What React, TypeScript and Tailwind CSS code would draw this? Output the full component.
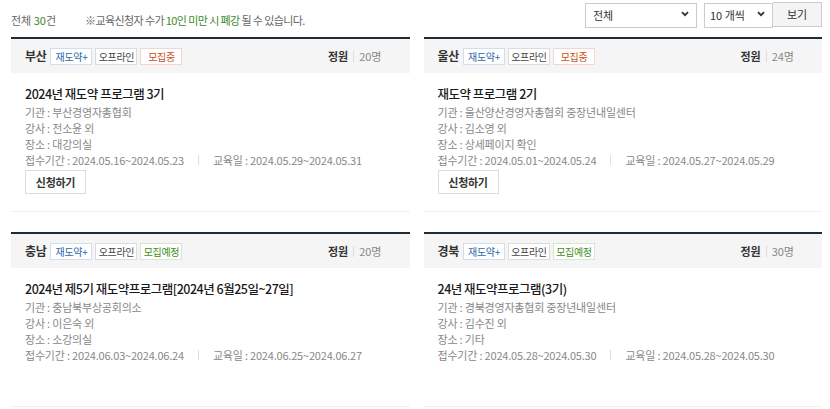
import React from "react";

type Card = {
  region: string;
  status: "모집중" | "모집예정";
  cap: string;
  title: string;
  org: string;
  teacher: string;
  place: string;
  recv: string;
  edu: string;
  apply: boolean;
};

const cards: Card[] = [
  {
    region: "부산",
    status: "모집중",
    cap: "20명",
    title: "2024년 재도약 프로그램 3기",
    org: "부산경영자총협회",
    teacher: "전소윤 외",
    place: "대강의실",
    recv: "2024.05.16~2024.05.23",
    edu: "2024.05.29~2024.05.31",
    apply: true,
  },
  {
    region: "울산",
    status: "모집중",
    cap: "24명",
    title: "재도약 프로그램 2기",
    org: "울산양산경영자총협회 중장년내일센터",
    teacher: "김소영 외",
    place: "상세페이지 확인",
    recv: "2024.05.01~2024.05.24",
    edu: "2024.05.27~2024.05.29",
    apply: true,
  },
  {
    region: "충남",
    status: "모집예정",
    cap: "20명",
    title: "2024년 제5기 재도약프로그램[2024년 6월25일~27일]",
    org: "충남북부상공회의소",
    teacher: "이은숙 외",
    place: "소강의실",
    recv: "2024.06.03~2024.06.24",
    edu: "2024.06.25~2024.06.27",
    apply: false,
  },
  {
    region: "경북",
    status: "모집예정",
    cap: "30명",
    title: "24년 재도약프로그램(3기)",
    org: "경북경영자총협회 중장년내일센터",
    teacher: "김수진 외",
    place: "기타",
    recv: "2024.05.28~2024.05.30",
    edu: "2024.05.28~2024.05.30",
    apply: false,
  },
];

const font = { fontFamily: '"Noto Sans CJK KR", "Noto Sans", sans-serif' };

function Chevron() {
  return (
    <svg width="8" height="6" viewBox="0 0 8 6" className="pointer-events-none absolute top-1/2 -translate-y-1/2 right-[8px]">
      <path d="M1 1.2 L4 4.2 L7 1.2" fill="none" stroke="#333" strokeWidth="1.8" />
    </svg>
  );
}

function CardView({ c }: { c: Card }) {
  return (
    <div className="border-t-2 border-[#1f2a38]">
      <div className="h-[34px] bg-[#f5f5f5] flex items-center pl-[14px] pr-[28px]">
        <span className="text-[12px] font-bold text-[#333] mr-[4px] tracking-[-0.3px]">{c.region}</span>
        <span className="w-[42px] h-[17px] flex items-center justify-center border border-[#cfdfee] bg-white text-[10px] tracking-[-0.3px] text-[#2a69ad]">재도약+</span>
        <span className="ml-[3px] w-[42px] h-[17px] flex items-center justify-center border border-[#dcdcdc] bg-white text-[10px] tracking-[-0.3px] text-[#444]">오프라인</span>
        {c.status === "모집중" ? (
          <span className="ml-[3px] w-[42px] h-[17px] flex items-center justify-center border border-[#f0d8cc] bg-white text-[10px] tracking-[-0.3px] text-[#c7511a]">모집중</span>
        ) : (
          <span className="ml-[3px] w-[42px] h-[17px] flex items-center justify-center border border-[#d8e6cc] bg-white text-[10px] tracking-[-0.3px] text-[#3f8f1c]">모집예정</span>
        )}
        <span className="ml-auto text-[11px] font-bold text-[#333]">정원</span>
        <span className="mx-[5px] w-px h-[11px] bg-[#ddd]" />
        <span className="text-[11px] text-[#888]">{c.cap}</span>
      </div>
      <div className="h-[139px] px-[14px] pt-[12px] border-b border-[#eef0f3]">
        <div className="text-[12.5px] leading-[18px] text-[#1a1a1a] font-medium tracking-[-0.5px]">{c.title}</div>
        <div className="mt-[1px] text-[11px] leading-[16px] text-[#888] tracking-[-0.2px]">
          <div>기관 : {c.org}</div>
          <div>강사 : {c.teacher}</div>
          <div>장소 : {c.place}</div>
          <div className="flex items-center">
            <span>접수기간 : {c.recv}</span>
            <span className="mx-[14px] w-px h-[10px] bg-[#ddd]" />
            <span>교육일 : {c.edu}</span>
          </div>
        </div>
        {c.apply && (
          <button className="mt-[2px] w-[61px] h-[24px] border border-[#dcdcdc] bg-white text-[11px] font-bold text-[#333] tracking-[-0.3px]">
            신청하기
          </button>
        )}
      </div>
    </div>
  );
}

export default function App() {
  return (
    <div className="w-[830px] h-[409px] bg-white overflow-hidden pl-[11px] pr-[8px]" style={font}>
      <div className="h-[37px] flex items-start pt-[1px]">
        <div className="flex items-center pt-[11px] text-[11px] text-[#666]">
          <span>
            전체 <span className="text-[#3b8a2a]">30</span>건
          </span>
          <span className="ml-[29px] tracking-[-0.6px]">
            ※교육신청자 수가 <span className="text-[#3b8a2a]">10인 미만 시 폐강</span> 될 수 있습니다.
          </span>
        </div>
        <div className="ml-auto flex items-center">
          <div className="relative">
            <select className="appearance-none w-[112px] h-[25px] border border-[#ccc] bg-white pl-[7px] text-[11px] text-[#333] outline-none" style={font} defaultValue="전체">
              <option>전체</option>
            </select>
            <Chevron />
          </div>
          <div className="relative ml-[7px]">
            <select className="appearance-none w-[69px] h-[25px] border border-[#ccc] bg-white pl-[5px] text-[11px] text-[#333] outline-none" style={font} defaultValue="10 개씩">
              <option>10 개씩</option>
            </select>
            <Chevron />
          </div>
          <button className="w-[49px] h-[25px] border border-l-0 border-[#ccc] bg-[#f4f4f4] text-[11px] text-[#333]">보기</button>
        </div>
      </div>
      <div className="grid grid-cols-2 gap-x-[14px] gap-y-[20px]">
        {cards.map((c, i) => (
          <CardView key={i} c={c} />
        ))}
      </div>
    </div>
  );
}
